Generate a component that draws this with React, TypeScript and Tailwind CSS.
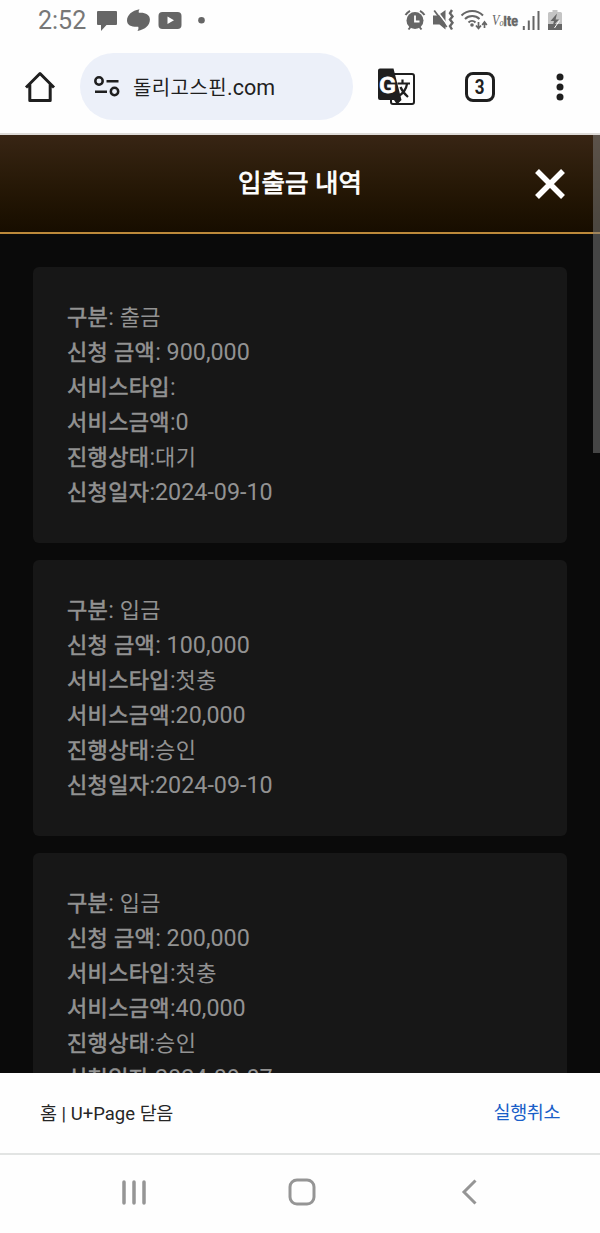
import React from 'react';

interface HistoryRecord {
  type: string;
  amount: string;
  serviceType: string;
  serviceAmount: string;
  status: string;
  date: string;
}

const records: HistoryRecord[] = [
  { type: '출금', amount: '900,000', serviceType: '', serviceAmount: '0', status: '대기', date: '2024-09-10' },
  { type: '입금', amount: '100,000', serviceType: '첫충', serviceAmount: '20,000', status: '승인', date: '2024-09-10' },
  { type: '입금', amount: '200,000', serviceType: '첫충', serviceAmount: '40,000', status: '승인', date: '2024-09-07' },
];

function StatusBar() {
  return (
    <div className="flex h-10 shrink-0 items-center justify-between pl-[38px] pr-[37px] text-[#666]">
      <div className="flex items-center">
        <span className="w-[58px] pt-0.5 text-[25px] leading-10 text-[#777]">2:52</span>
        <svg className="h-10 w-[112px]" viewBox="96 0 112 40" fill="currentColor">
          <path d="M98 11h18a1 1 0 0 1 1 1v12a1 1 0 0 1-1 1h-9.500l-5.500 6v-6h-3a1 1 0 0 1-1-1V12a1 1 0 0 1 1-1z" />
          <path d="M139.500 9.200c-.9 1.300-1 2.700-.6 3.600 6-.6 11 1.700 11 6.700 0 5.500-4.500 10-12.400 11.500 1-1.500 1.200-3 .7-4.200-6 .4-11.200-1.300-11.200-6.300 0-5.500 5-10 12.500-11.300z" />
          <rect x="158.500" y="12" width="23" height="17" rx="4" />
          <path d="m167.500 16.500 6.500 3.800-6.500 3.800z" fill="#fff" />
          <circle cx="201.500" cy="20.300" r="3.300" />
        </svg>
      </div>
      <svg className="h-10 w-[162px]" viewBox="401 0 162 40" fill="currentColor">
        {/* alarm */}
        <circle cx="415" cy="20.500" r="8.500" />
        <path d="M405.500 15a12 12 0 0 1 4.500-4.200M424.500 15a12 12 0 0 0-4.500-4.200M410.500 27l-2 2.500M419.500 27l2 2.500" stroke="currentColor" strokeWidth="2" fill="none" />
        <path d="M415 15.500v6h4.500" stroke="#fff" strokeWidth="1.800" fill="none" />
        {/* muted, vibrating */}
        <path d="M433 15.500h5l2-1.500 5.500-4v19.500l-6-5h-6.500z" />
        <path d="m435.500 9 12 16" stroke="#fefefe" strokeWidth="1.500" />
        <path d="m434.200 10.500 12.500 16.500" stroke="currentColor" strokeWidth="1.800" />
        <path d="m452 10-2 3.200 2.500 3.200-2.500 3.200 2.500 3.200-2.500 3.200 2 3.500" stroke="currentColor" strokeWidth="2.400" fill="none" />
        {/* wifi */}
        <path d="M461.500 15.500c6-6 15.500-6 21.500 0M465 19c4-4 10.500-4 14.500 0M468.500 22.500c2-2 5-2 7 0" stroke="currentColor" strokeWidth="2" fill="none" />
        <circle cx="472" cy="25" r="1.800" />
        <path d="M478.500 22v6m-2.500-2.500 2.500 3 2.500-3M484.500 28v-5.500m-2.300 2.500 2.300-3 2.300 3" stroke="currentColor" strokeWidth="1.700" fill="none" />
        {/* volte */}
        <text x="492" y="25" fontSize="15" fontStyle="italic" fontFamily="Liberation Serif, serif" textLength="11.500" lengthAdjust="spacingAndGlyphs">
          V<tspan fontSize="10" dy="1">o</tspan>
        </text>
        <text x="503.500" y="26" fontSize="13" fontWeight="800" fontFamily="Inter, sans-serif" stroke="currentColor" strokeWidth=".4" textLength="14.500" lengthAdjust="spacingAndGlyphs">lte</text>
        {/* signal */}
        <path d="M523.800 30v-4M528.800 30v-9.500M533.500 30V16M538.500 30V11" stroke="currentColor" strokeWidth="2" />
        {/* battery */}
        <path d="M552.500 10h5v2h3a1.500 1.500 0 0 1 1.500 1.500V25h-14V13.500a1.500 1.500 0 0 1 1.500-1.500h3z" fill="#c4c4c4" />
        <path d="M548 24h14v6h-14z" />
        <path d="m554.500 28 5-7.500" stroke="#fff" strokeWidth="1" />
        <path d="m557 13.500-6.500 7.500h3.500l-1.500 5.500 6.500-7h-3.400z" />
      </svg>
    </div>
  );
}

function AddressBar() {
  return (
    <div className="flex h-[95px] shrink-0 items-center border-b-2 border-[#dedbd8] text-[#1f1f1f]">
      <svg className="ml-6 h-8 w-8" viewBox="24 71 32 32" fill="none" stroke="currentColor" strokeWidth="3">
        <path d="M26 87.500 40 73.500l14 14M29.800 84v16.500h20.400V84" strokeLinejoin="round" />
      </svg>
      <div className="ml-6 flex h-[67px] w-[273px] items-center rounded-full bg-[#ecf0f9] pl-[14px]">
        <svg className="h-6 w-[26px]" viewBox="94 75 26 24" fill="none" stroke="currentColor" strokeWidth="2.500">
          <circle cx="99" cy="81" r="3.700" />
          <circle cx="114.500" cy="91.500" r="3.700" />
          <path d="M106.500 81.300h12M95 91.800h12" />
        </svg>
        <span className="ml-[13px] pt-1 text-[21.500px]">
          <span className="text-[20px] tracking-[0.400px]">돌리고스핀</span>.com
        </span>
      </div>
      {/* translate */}
      <svg className="ml-6 h-10 w-10" viewBox="377 67 40 40">
        <rect x="391" y="74" width="23" height="30" rx="2" fill="#fff" stroke="#1f1f1f" strokeWidth="2" />
        <path d="M380 68.500h13.500l8 31.500-4.500 4.500-3-4.500H380a2 2 0 0 1-2-2V70.500a2 2 0 0 1 2-2z" fill="#1f1f1f" />
        <text x="379" y="92.500" fontSize="22" fontWeight="500" fill="#fff" stroke="#fff" strokeWidth=".8" fontFamily="Roboto, sans-serif" textLength="17" lengthAdjust="spacingAndGlyphs">G</text>
        <path d="M397.500 83.500h12.500M402.500 79.500v4M407 84c-.8 5.500-4 9.500-9 12.500M400.500 87c1.500 4 4 7 7.500 10" fill="none" stroke="#1f1f1f" strokeWidth="2.200" />
      </svg>
      <div className="ml-12 flex size-[30px] items-center justify-center rounded-[8px] border-3 border-current">
        <span className="scale-x-85 text-[20px] font-bold">3</span>
      </div>
      <svg className="ml-[60px] h-8 w-[10px]" viewBox="0 0 10 32" fill="currentColor">
        <circle cx="5" cy="6" r="3.500" />
        <circle cx="5" cy="16" r="3.500" />
        <circle cx="5" cy="26" r="3.500" />
      </svg>
    </div>
  );
}

function Field({ label, value, spaced = false }: { label: string; value: string; spaced?: boolean }) {
  const korean = /[가-힣]/.test(value);
  return (
    <p className="h-[35px] whitespace-pre leading-[35px]">
      <b className="text-[22px] font-normal tracking-[0.350px] [-webkit-text-stroke:0.6px]">{label}</b>:{spaced ? ' ' : ''}
      <span className={korean ? 'text-[22px] tracking-[0.400px]' : ''}>{value}</span>
    </p>
  );
}

function RecordCard({ record }: { record: HistoryRecord }) {
  return (
    <div className="h-[276.700px] shrink-0 rounded-[6px] bg-[#171717] px-[34px] pt-[33.300px] text-[23.300px] text-[#929292]">
      <Field label="구분" value={record.type} spaced />
      <Field label="신청 금액" value={record.amount} spaced />
      <Field label="서비스타입" value={record.serviceType} />
      <Field label="서비스금액" value={record.serviceAmount} />
      <Field label="진행상태" value={record.status} />
      <Field label="신청일자" value={record.date} />
    </div>
  );
}

export default function App() {
  return (
    <div className="flex h-[1233px] w-[600px] flex-col overflow-hidden bg-[#fefefe] font-['Roboto','Noto_Sans_CJK_KR',sans-serif]">
      <StatusBar />
      <AddressBar />

      <main className="relative flex h-[938px] shrink-0 flex-col overflow-hidden bg-[#0a0a0a]">
        <header className="flex h-[99px] shrink-0 items-center border-b-2 border-[#bd893a] bg-linear-to-b from-[#382514] to-[#170d00] text-white">
          <h1 className="flex-1 pl-[66px] text-center text-[25.500px] tracking-[0.100px] [-webkit-text-stroke:0.8px]">입출금 내역</h1>
          <button className="mr-[34px] size-8" aria-label="닫기">
            <svg viewBox="0 0 32 32" className="size-8" stroke="currentColor" strokeWidth="5.500">
              <path d="m3 3 26 26M29 3 3 29" />
            </svg>
          </button>
        </header>
        <div className="flex flex-col gap-[16.600px] pl-[33px] pr-[33px] pt-[32.500px]">
          {records.map((record, i) => (
            <RecordCard key={i} record={record} />
          ))}
        </div>
        {/* scroll thumb */}
        <div className="absolute right-0 top-0 h-[318px] w-[7px] bg-[#808080]/50" />
      </main>

      <div className="flex h-[82px] shrink-0 items-center justify-between border-b-2 border-[#e2e4e3] px-10">
        <span className="pt-1 text-[18.500px] text-[#262626]">
          <span>홈</span> | U+Page <span className="tracking-[-0.500px]">닫음</span>
        </span>
        <span className="pt-0.5 text-[18.500px] tracking-[-0.400px] text-[#1a5fc8]">실행취소</span>
      </div>

      <nav className="flex flex-1 items-center justify-between pb-1 pl-[121px] pr-[122px] text-[#959595]">
        <svg className="h-7 w-[26px]" viewBox="0 0 26 28" stroke="currentColor" strokeWidth="3.500" strokeLinecap="round">
          <path d="M3 4v21M13 4v21M23 4v21" />
        </svg>
        <svg className="mr-1 h-7 w-7" viewBox="0 0 28 28" fill="none" stroke="currentColor" strokeWidth="3">
          <rect x="2" y="2" width="24" height="24" rx="7" />
        </svg>
        <svg className="h-7 w-[18px]" viewBox="0 0 18 28" fill="none" stroke="currentColor" strokeWidth="3">
          <path d="M15.500 2.500 4 14l11.500 11.500" />
        </svg>
      </nav>
    </div>
  );
}
